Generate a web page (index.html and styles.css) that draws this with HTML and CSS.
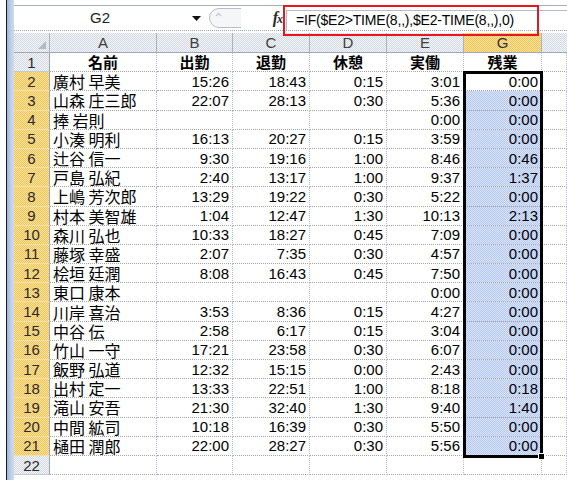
FILE: index.html
```html
<!DOCTYPE html>
<html>
<head>
<meta charset="utf-8">
<link rel="stylesheet" href="styles.css">
</head>
<body>
<div class="window">
  <div class="edge"></div>
  <div class="frame-line"></div>
  <div class="strip"></div>
  <div class="main">
    <div class="fbar">
      <div class="fbar-row">
        <div class="namebox">G2</div>
        <div class="dd"><svg width="9" height="6" viewBox="0 0 9 6"><path d="M0 0H9L4.5 5Z" fill="#111"/></svg></div>
        <div class="bubble"><svg width="34" height="22" viewBox="0 0 34 22"><path d="M34 1.5H12A9.5 9.5 0 0 0 12 20.5H34" fill="#f4f6f8" stroke="#b8bec8"/><path d="M9 9L11.5 6.5L14 9" fill="none" stroke="#c4c8d0" stroke-width="1.3"/></svg></div>
        <div class="fx">f<span>x</span></div>
        <div class="input">=IF($E2&gt;TIME(8,,),$E2-TIME(8,,),0)</div>
      </div>
    </div>
    <div class="redbox"></div>
    <table class="grid">
      <colgroup>
        <col class="c-rh"><col class="c-a"><col class="c-b"><col class="c-c"><col class="c-d"><col class="c-e"><col class="c-g"><col class="c-h">
      </colgroup>
      <thead>
        <tr class="hdr">
          <th class="corner"><span class="tri"></span></th>
          <th>A</th><th>B</th><th>C</th><th>D</th><th>E</th><th class="hsel">G</th><th class="hlast"></th>
        </tr>
      </thead>
      <tbody>
        <tr class="r1"><th class="rh">1</th><td class="hd">名前</td><td class="hd">出勤</td><td class="hd">退勤</td><td class="hd">休憩</td><td class="hd">実働</td><td class="hd">残業</td><td></td></tr>
        <tr><th class="rh on">2</th><td class="nm">廣村 早美</td><td>15:26</td><td>18:43</td><td>0:15</td><td>3:01</td><td class="act">0:00</td><td></td></tr>
        <tr><th class="rh on">3</th><td class="nm">山森 庄三郎</td><td>22:07</td><td>28:13</td><td>0:30</td><td>5:36</td><td class="sel">0:00</td><td></td></tr>
        <tr><th class="rh on">4</th><td class="nm">捧 岩則</td><td></td><td></td><td></td><td>0:00</td><td class="sel">0:00</td><td></td></tr>
        <tr><th class="rh on">5</th><td class="nm">小湊 明利</td><td>16:13</td><td>20:27</td><td>0:15</td><td>3:59</td><td class="sel">0:00</td><td></td></tr>
        <tr><th class="rh on">6</th><td class="nm">辻谷 信一</td><td>9:30</td><td>19:16</td><td>1:00</td><td>8:46</td><td class="sel">0:46</td><td></td></tr>
        <tr><th class="rh on">7</th><td class="nm">戸島 弘紀</td><td>2:40</td><td>13:17</td><td>1:00</td><td>9:37</td><td class="sel">1:37</td><td></td></tr>
        <tr><th class="rh on">8</th><td class="nm">上嶋 芳次郎</td><td>13:29</td><td>19:22</td><td>0:30</td><td>5:22</td><td class="sel">0:00</td><td></td></tr>
        <tr><th class="rh on">9</th><td class="nm">村本 美智雄</td><td>1:04</td><td>12:47</td><td>1:30</td><td>10:13</td><td class="sel">2:13</td><td></td></tr>
        <tr><th class="rh on">10</th><td class="nm">森川 弘也</td><td>10:33</td><td>18:27</td><td>0:45</td><td>7:09</td><td class="sel">0:00</td><td></td></tr>
        <tr><th class="rh on">11</th><td class="nm">藤塚 幸盛</td><td>2:07</td><td>7:35</td><td>0:30</td><td>4:57</td><td class="sel">0:00</td><td></td></tr>
        <tr><th class="rh on">12</th><td class="nm">桧垣 廷潤</td><td>8:08</td><td>16:43</td><td>0:45</td><td>7:50</td><td class="sel">0:00</td><td></td></tr>
        <tr><th class="rh on">13</th><td class="nm">東口 康本</td><td></td><td></td><td></td><td>0:00</td><td class="sel">0:00</td><td></td></tr>
        <tr><th class="rh on">14</th><td class="nm">川岸 喜治</td><td>3:53</td><td>8:36</td><td>0:15</td><td>4:27</td><td class="sel">0:00</td><td></td></tr>
        <tr><th class="rh on">15</th><td class="nm">中谷 伝</td><td>2:58</td><td>6:17</td><td>0:15</td><td>3:04</td><td class="sel">0:00</td><td></td></tr>
        <tr><th class="rh on">16</th><td class="nm">竹山 一守</td><td>17:21</td><td>23:58</td><td>0:30</td><td>6:07</td><td class="sel">0:00</td><td></td></tr>
        <tr><th class="rh on">17</th><td class="nm">飯野 弘道</td><td>12:32</td><td>15:15</td><td>0:00</td><td>2:43</td><td class="sel">0:00</td><td></td></tr>
        <tr><th class="rh on">18</th><td class="nm">出村 定一</td><td>13:33</td><td>22:51</td><td>1:00</td><td>8:18</td><td class="sel">0:18</td><td></td></tr>
        <tr><th class="rh on">19</th><td class="nm">滝山 安吾</td><td>21:30</td><td>32:40</td><td>1:30</td><td>9:40</td><td class="sel">1:40</td><td></td></tr>
        <tr><th class="rh on">20</th><td class="nm">中間 絋司</td><td>10:18</td><td>16:39</td><td>0:30</td><td>5:50</td><td class="sel">0:00</td><td></td></tr>
        <tr><th class="rh on">21</th><td class="nm">樋田 潤郎</td><td>22:00</td><td>28:27</td><td>0:30</td><td>5:56</td><td class="sel">0:00</td><td></td></tr>
        <tr><th class="rh">22</th><td></td><td></td><td></td><td></td><td></td><td></td><td></td></tr>
      </tbody>
    </table>
    <div class="selbox"><span class="handle"></span></div>
  </div>
</div>
</body>
</html>
```

FILE: styles.css
```css
html, body {
  margin: 0;
  padding: 0;
  background: #fff;
}
body {
  font-family: "Liberation Sans", Arial, sans-serif;
  color: #000;
}
.window {
  display: flex;
  width: 567px;
  height: 480px;
  overflow: hidden;
}
.edge {
  width: 6px;
  flex: none;
}
.frame-line {
  width: 1px;
  flex: none;
  background: #1a1a1a;
}
.strip {
  width: 7px;
  flex: none;
  background: linear-gradient(90deg, #9db4d6 0, #b8cbe6 3px, #cfdcef 7px);
}
.main {
  flex: 1;
  position: relative;
  min-width: 0;
}
.fbar {
  height: 33px;
  padding-top: 5px;
  box-sizing: border-box;
}
.fbar-row {
  height: 26px;
  box-sizing: border-box;
  border-top: 1px solid #a7adb6;
  border-bottom: 1px dotted #a0a6b0;
  display: flex;
  align-items: center;
}
.namebox {
  width: 172px;
  flex: none;
  text-align: center;
  font-size: 15px;
  color: #1e1e1e;
  line-height: 24px;
}
.dd {
  width: 17px;
  flex: none;
  display: flex;
  justify-content: center;
  padding-left: 3px;
  box-sizing: border-box;
  padding-top: 1px;
}
.bubble {
  width: 46px;
  flex: none;
  display: flex;
  padding-left: 4px;
  box-sizing: border-box;
}
.fx {
  width: 37px;
  flex: none;
  text-align: right;
  padding-right: 4px;
  box-sizing: border-box;
  font-family: "Liberation Serif", serif;
  font-style: italic;
  font-weight: bold;
  font-size: 16px;
  color: #2b2b2b;
  letter-spacing: -1px;
}
.fx span {
  font-size: 12px;
}
.input {
  flex: 1;
  align-self: stretch;
  margin-top: 4px;
  border-top: 1px solid #b8bcc4;
  border-left: 1px solid #b8bcc4;
  padding-left: 9px;
  font-size: 14px;
  letter-spacing: -0.2px;
  line-height: 19px;
  color: #000;
  white-space: nowrap;
}
.redbox {
  position: absolute;
  left: 269px;
  top: 5px;
  width: 256px;
  height: 31px;
  box-sizing: border-box;
  border: 2px solid #e8161e;
}
.grid {
  border-collapse: separate;
  border-spacing: 0;
  table-layout: fixed;
  width: 553px;
}
.c-rh { width: 36px; }
.c-a { width: 107px; }
.c-b { width: 76px; }
.c-c { width: 77px; }
.c-d { width: 77px; }
.c-e { width: 77px; }
.c-g { width: 78px; }
.c-h { width: 25px; }
.hdr th {
  height: 20px;
  padding: 0;
  box-sizing: border-box;
  font-weight: normal;
  font-size: 15px;
  color: #3e3e3e;
  text-align: center;
  background: repeating-conic-gradient(#d3d9e3 0 25%, #f3f5f8 0 50%) 0 0 / 2px 2px;
  border-right: 1px solid #aab2c0;
  border-bottom: 1px solid #9ea8b8;
}
.hdr th.hsel {
  background: repeating-conic-gradient(#f3c25a 0 25%, #fbe49c 0 50%) 0 0 / 2px 2px;
  color: #333;
}
.hdr th.hlast {
  border-right: none;
}
.hdr th.corner {
  position: relative;
}
.tri {
  position: absolute;
  right: 3px;
  bottom: 3px;
  width: 0;
  height: 0;
  border-left: 8px solid transparent;
  border-bottom: 8px solid #b4bac4;
}
tbody tr {
  height: 19.2px;
}
tbody th.rh {
  padding: 0;
  font-weight: normal;
  font-size: 15px;
  color: #2a2a2a;
  text-align: center;
  line-height: 17px;
  background: repeating-conic-gradient(#d3d9e3 0 25%, #f3f5f8 0 50%) 0 0 / 2px 2px;
  border-right: 1px solid #9aa4b4;
  border-bottom: 1px solid #c4cad4;
}
tbody th.rh.on {
  background: repeating-conic-gradient(#f3c25a 0 25%, #fbe49c 0 50%) 0 0 / 2px 2px;
  border-bottom: 1px solid #f4dfa6;
}
td {
  padding: 0 3px 0 0;
  font-size: 15px;
  line-height: 17px;
  text-align: right;
  white-space: nowrap;
  border-right: 1px dotted #b4bad0;
  border-bottom: 1px dotted #a6a6a6;
}
td.nm {
  text-align: left;
  padding: 0 0 0 3px;
  font-family: "Noto Sans CJK JP", "Noto Sans CJK SC", sans-serif;
  font-size: 16px;
  line-height: 18px;
}
td.hd {
  text-align: center;
  padding: 0;
  font-family: "Noto Sans CJK JP", "Noto Sans CJK SC", sans-serif;
  font-weight: bold;
  font-size: 15px;
  line-height: 18px;
}
td.sel {
  background: repeating-conic-gradient(#b6c9f6 0 25%, #d9e4fb 0 50%) 0 0 / 2px 2px;
}
.selbox {
  position: absolute;
  left: 449px;
  top: 71px;
  width: 80px;
  height: 387px;
  box-sizing: border-box;
  border: 3px solid #000;
}
.handle {
  position: absolute;
  right: -5px;
  bottom: -5px;
  width: 5px;
  height: 5px;
  background: #000;
  border: 1px solid #fff;
}
```
